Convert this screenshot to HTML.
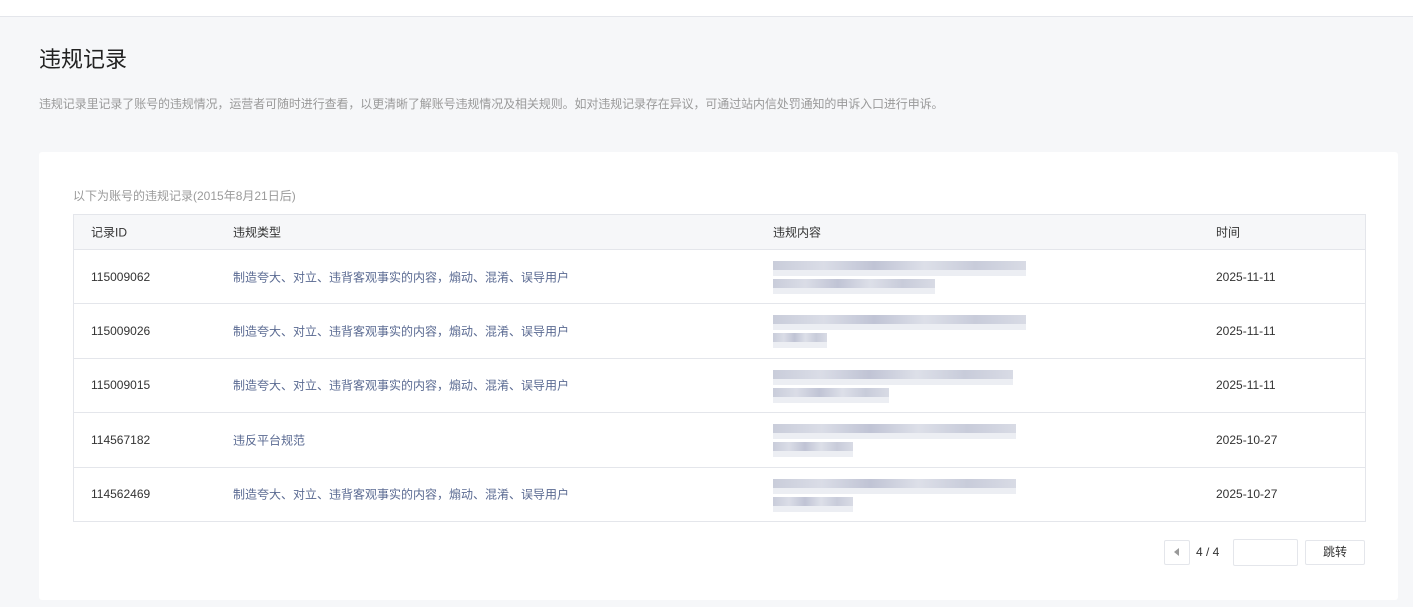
<!DOCTYPE html>
<html><head><meta charset="utf-8"><style>
*{margin:0;padding:0;box-sizing:border-box}
body{width:1413px;height:607px;background:#f6f7f9;font-family:"Liberation Sans","Noto Sans CJK SC",sans-serif;position:relative;overflow:hidden;color:#333}
.top{position:absolute;left:0;top:0;width:1413px;height:17px;background:#fff;border-bottom:1px solid #e4e6eb}
h1{position:absolute;left:39px;top:42px;font-size:22px;font-weight:normal;color:#222}
.desc{position:absolute;left:39px;top:95px;font-size:12px;color:#9a9a9a;letter-spacing:-0.1px}
.card{position:absolute;left:39px;top:152px;width:1359px;height:448px;background:#fff;border-radius:3px}
.sub{position:absolute;left:73px;top:187px;font-size:12px;color:#9a9a9a}
.tbl{position:absolute;left:73px;top:214px;width:1293px;border:1px solid #e4e6eb;border-bottom:none}
.row{height:54.4px;border-bottom:1px solid #e4e6eb;position:relative;font-size:12px}
.hd{height:35px;background:#f6f7f9;color:#333}
.row span{position:absolute;top:50%;transform:translateY(-50%)}
.c1{left:17px}.c2{left:159px}.c3{left:699px}.c4{left:1142px}
.t{color:#5a6a92}
.blur{position:absolute;left:699px;top:11px;width:253px;height:34px}
.b{position:absolute;height:9px;background:linear-gradient(90deg,#c3c7d6,#d6d9e4 20%,#b9bdd0 40%,#d9dce6 60%,#c2c6d6 80%,#d4d7e2);opacity:.9}
.bl{position:absolute;height:6px;background:#eceef3}
.pg{position:absolute;top:540px;height:25px;border:1px solid #e4e6eb;border-radius:2px;background:#fff;font-size:12px}
</style></head><body>
<div class="top"></div>
<h1>违规记录</h1>
<div class="desc">违规记录里记录了账号的违规情况，运营者可随时进行查看，以更清晰了解账号违规情况及相关规则。如对违规记录存在异议，可通过站内信处罚通知的申诉入口进行申诉。</div>
<div class="card"></div>
<div class="sub">以下为账号的违规记录(2015年8月21日后)</div>
<div class="tbl">
<div class="row hd"><span class="c1">记录ID</span><span class="c2">违规类型</span><span class="c3">违规内容</span><span class="c4">时间</span></div>
<div class="row"><span class="c1">115009062</span><span class="c2 t">制造夸大、对立、违背客观事实的内容，煽动、混淆、误导用户</span><div class="blur"><div class="b" style="left:0;top:0;width:253px"></div><div class="bl" style="left:0;top:9px;width:253px"></div><div class="b" style="left:0;top:18px;width:162px"></div><div class="bl" style="left:0;top:27px;width:162px"></div></div><span class="c4">2025-11-11</span></div>
<div class="row"><span class="c1">115009026</span><span class="c2 t">制造夸大、对立、违背客观事实的内容，煽动、混淆、误导用户</span><div class="blur"><div class="b" style="left:0;top:0;width:253px"></div><div class="bl" style="left:0;top:9px;width:253px"></div><div class="b" style="left:0;top:18px;width:54px"></div><div class="bl" style="left:0;top:27px;width:54px"></div></div><span class="c4">2025-11-11</span></div>
<div class="row"><span class="c1">115009015</span><span class="c2 t">制造夸大、对立、违背客观事实的内容，煽动、混淆、误导用户</span><div class="blur"><div class="b" style="left:0;top:0;width:240px"></div><div class="bl" style="left:0;top:9px;width:240px"></div><div class="b" style="left:0;top:18px;width:116px"></div><div class="bl" style="left:0;top:27px;width:116px"></div></div><span class="c4">2025-11-11</span></div>
<div class="row"><span class="c1">114567182</span><span class="c2 t">违反平台规范</span><div class="blur"><div class="b" style="left:0;top:0;width:243px"></div><div class="bl" style="left:0;top:9px;width:243px"></div><div class="b" style="left:0;top:18px;width:80px"></div><div class="bl" style="left:0;top:27px;width:80px"></div></div><span class="c4">2025-10-27</span></div>
<div class="row"><span class="c1">114562469</span><span class="c2 t">制造夸大、对立、违背客观事实的内容，煽动、混淆、误导用户</span><div class="blur"><div class="b" style="left:0;top:0;width:243px"></div><div class="bl" style="left:0;top:9px;width:243px"></div><div class="b" style="left:0;top:18px;width:80px"></div><div class="bl" style="left:0;top:27px;width:80px"></div></div><span class="c4">2025-10-27</span></div>
</div>
<div class="pg" style="left:1164px;width:26px"><div style="position:absolute;left:9px;top:7px;width:0;height:0;border-top:4px solid transparent;border-bottom:4px solid transparent;border-right:5px solid #999"></div></div>
<div style="position:absolute;left:1196px;top:545px;font-size:12px;color:#333">4 / 4</div>
<div class="pg" style="left:1233px;width:65px;top:539px;height:27px"></div>
<div class="pg" style="left:1305px;width:60px;text-align:center;line-height:23px">跳转</div>
</body></html>
